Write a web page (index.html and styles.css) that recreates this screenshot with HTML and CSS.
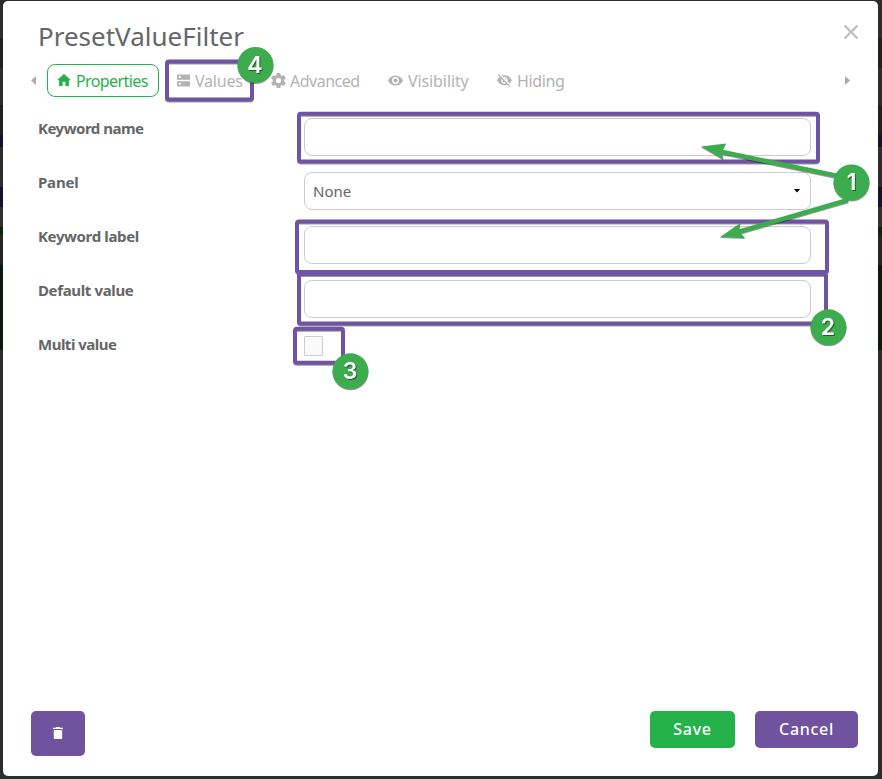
FILE: index.html
```html
<!DOCTYPE html>
<html lang="en">
<head>
<meta charset="utf-8">
<title>PresetValueFilter</title>
<link rel="stylesheet" href="styles.css">
</head>
<body>
<main class="dialog">
  <header class="head">
    <h1 class="title">PresetValueFilter</h1>
    <button class="close" aria-label="Close"><svg width="16" height="16" viewBox="0 0 16 16"><path d="M1.500 1.500l13 13M14.500 1.500l-13 13" stroke="#c0c0c0" stroke-width="2.400"/></svg></button>
  </header>
  <nav class="tabs">
    <svg class="prev" width="5" height="9" viewBox="0 0 5 9"><path d="M5 0v9L0 4.500z" fill="#aaa"/></svg>
    <a class="tab active"><svg width="14" height="12" viewBox="2 3 20 17"><path d="M10 20v-6h4v6h5v-8h3L12 3 2 12h3v8z"/></svg><span class="t1">Properties</span></a>
    <a class="tab values"><svg width="13" height="13" viewBox="0 0 13 13"><path fill-rule="evenodd" d="M0 .500h13v5.200H0zM1.800 2v2h2V2zM0 7.200h13v5.200H0zM1.800 8.700v2h2v-2z"/></svg><span class="t2">Values</span></a>
    <a class="tab adv"><svg width="15" height="15" viewBox="2 2 20 20"><path d="M19.430 12.980c.040-.320.070-.640.070-.980s-.030-.660-.070-.980l2.110-1.650c.190-.150.240-.420.120-.640l-2-3.460c-.120-.220-.390-.300-.610-.220l-2.490 1c-.520-.400-1.080-.730-1.690-.980l-.380-2.650C14.460 2.180 14.250 2 14 2h-4c-.250 0-.460.180-.490.420l-.380 2.650c-.610.250-1.170.590-1.690.980l-2.490-1c-.230-.090-.490 0-.610.220l-2 3.460c-.130.220-.070.490.120.640l2.110 1.650c-.040.320-.070.650-.070.980s.030.660.070.980l-2.110 1.650c-.190.150-.240.420-.120.640l2 3.460c.120.220.390.300.610.220l2.490-1c.520.400 1.080.730 1.690.980l.380 2.650c.030.240.240.420.490.420h4c.250 0 .460-.180.490-.420l.380-2.650c.610-.250 1.170-.590 1.690-.980l2.490 1c.230.090.490 0 .610-.220l2-3.460c.120-.220.070-.490-.120-.640zM12 15.500a3.500 3.500 0 1 1 0-7 3.500 3.500 0 0 1 0 7z"/></svg><span class="t3">Advanced</span></a>
    <a class="tab vis"><svg width="15" height="11" viewBox="1 4.500 22 15"><path d="M12 4.500C7 4.500 2.730 7.610 1 12c1.730 4.390 6 7.500 11 7.500s9.270-3.110 11-7.500c-1.730-4.390-6-7.500-11-7.500zM12 17a5 5 0 1 1 0-10 5 5 0 0 1 0 10zm0-8a3 3 0 1 0 0 6 3 3 0 0 0 0-6z"/></svg><span class="t4">Visibility</span></a>
    <a class="tab hid"><svg width="15" height="13" viewBox="1 2.500 22 19.500"><path d="M12 7c2.760 0 5 2.240 5 5 0 .650-.130 1.260-.360 1.830l2.920 2.920c1.510-1.260 2.700-2.890 3.430-4.750-1.730-4.390-6-7.500-11-7.500-1.400 0-2.740.250-3.980.700l2.160 2.160C10.740 7.130 11.350 7 12 7zM2 4.270l2.740 2.740C3.080 8.300 1.780 10.020 1 12c1.730 4.390 6 7.500 11 7.500 1.550 0 3.030-.300 4.380-.840L19.730 22 21 20.730 3.270 3zM7.530 9.800l1.550 1.550A3 3 0 0 0 12 15c.220 0 .440-.030.650-.080l1.550 1.550A5 5 0 0 1 7.530 9.800zm4.310-.780l3.150 3.150.020-.160a3 3 0 0 0-3.170-2.990z"/></svg><span class="t5">Hiding</span></a>
    <svg class="next" width="5" height="9" viewBox="0 0 5 9"><path d="M0 0v9l5-4.500z" fill="#aaa"/></svg>
  </nav>
  <form class="form">
    <label>Keyword name</label><div class="field"></div>
    <label class="short">Panel</label><div class="field"><span class="none">None</span><svg width="6" height="4" viewBox="0 0 6 4"><path d="M0 0h6L3 3.500z"/></svg></div>
    <label class="mid">Keyword label</label><div class="field"></div>
    <label class="mid">Default value</label><div class="field"></div>
    <label>Multi value</label><div class="check"></div>
  </form>
  <footer class="foot">
    <button class="btn trash" aria-label="Delete"><svg width="10" height="12" viewBox="0 0 10 12"><path d="M3.300 0h3.400l.6.700H10V2H0V.700h2.700zM.8 3h8.400v8.200q0 .8-.8.800H1.600q-.8 0-.8-.8z" fill="#fff"/></svg></button>
    <button class="btn save">Save</button>
    <button class="btn cancel">Cancel</button>
  </footer>
</main>
<svg class="notes" width="882" height="779" viewBox="0 0 882 779">
  <g class="frames">
    <rect x="167" y="61.500" width="85" height="38" rx="2"/>
    <rect x="299" y="113.700" width="519" height="47.800" rx="2"/>
    <rect x="297" y="221.500" width="530" height="50.500" rx="2"/>
    <rect x="299" y="274" width="527" height="49.500" rx="2"/>
    <rect x="295" y="328.700" width="48" height="34" rx="2"/>
  </g>
  <g class="marks">
    <path d="M838 176L720 151.500" class="shaft"/><path d="M848 200L738 232" class="shaft"/>
    <path d="M701 146.500l25-3-4.500 8.500 2 7.500z"/><path d="M720 237l20.500-14-1.500 8.500 6 6.500z"/>
    <circle cx="851.500" cy="182.500" r="18"/><circle cx="828.500" cy="327.300" r="18"/><circle cx="350.500" cy="371.300" r="18"/><circle cx="255.500" cy="65" r="18"/>
  </g>
  <g class="nums"><text x="851.500" y="190.300">1</text><text x="828" y="335.300">2</text><text x="350" y="379.300">3</text><text x="255" y="73">4</text></g>
</svg>
</body>
</html>
```
FILE: styles.css
```css
* { box-sizing: border-box; }
body {
  margin: 0; height: 779px; overflow: hidden; padding: 1px 4px 3px 3px; position: relative;
  background: linear-gradient(#2c2c2c 0 38px, #202020 38px 68px, #2c2c2c 68px 105px, #202020 105px 135px, #15132b 135px 147px, #2c2c2c 147px 187px, #15132b 187px 207px, #303030 207px 227px, #08260e 227px 235px, #252525 235px 265px, #09190d 265px 350px, #2b2c2c 350px);
  font-family: "Noto Sans", sans-serif; color: #666;
}
.dialog { height: 775px; background: #fff; border-radius: 5px; display: flex; flex-direction: column; }
.head { height: 62px; padding: 16px 19px 0 35px; display: flex; justify-content: space-between; }
.title { margin: 0; font-size: 26px; line-height: 39px; font-weight: 400; }
.close { border: 0; background: none; padding: 7px 0 0; width: 16px; height: 23px; line-height: 0; }
.tabs { height: 34px; display: flex; align-items: center; padding: 0 28px; }
.tab { height: 33px; display: flex; align-items: center; gap: 4px; font-size: 16px; color: #b3b3b3; fill: #b3b3b3; white-space: nowrap; }
.tab svg { flex: none; }
.tab span { padding-top: 2px; }
.t1 { letter-spacing: -.6px; }
.t2 { letter-spacing: -.2px; }
.t3 { letter-spacing: -.5px; }
.t4 { letter-spacing: -.1px; }
.t5 { letter-spacing: -.35px; }
.active { margin-left: 11px; width: 112px; padding-left: 9px; gap: 5px; border: 1px solid #26b24b; border-radius: 8px; color: #26b24b; fill: #26b24b; }
.values { margin-left: 18px; width: 94px; gap: 5px; }
.adv { width: 117px; }
.vis { width: 109px; gap: 5px; }
.hid { gap: 5px; }
.next { margin-left: auto; }
.form { display: grid; grid-template-columns: 266px 507px; grid-auto-rows: 54px; padding: 21px 0 0 35px; }
.form label { font-size: 15px; line-height: 20px; font-weight: 700; letter-spacing: -.5px; }
.form .mid { letter-spacing: -.36px; }
.form .short { letter-spacing: -.2px; }
.field { height: 38px; border: 1px solid #ccc; border-radius: 8px; display: flex; align-items: center; justify-content: space-between; padding: 0 10px 0 8px; font-size: 15px; }
.check { width: 19px; height: 20px; margin-top: 2px; border: 1px solid #ccc; background: #fafafa; border-radius: 1px; }
.foot { margin-top: auto; height: 65px; padding: 0 20px 0 28px; display: flex; align-items: flex-start; }
.btn { border: 0; border-radius: 5px; height: 37px; padding: 0 0 2px; background: #6f539e; color: #fff; font: 500 16px "Noto Sans", sans-serif; letter-spacing: .7px; }
.trash { width: 54px; height: 45px; margin-right: auto; }
.save { width: 85px; background: #26b24b; margin-right: 20px; }
.cancel { width: 103px; }
.notes { position: absolute; left: 0; top: 0; }
.frames { fill: none; stroke: #6f54a3; stroke-width: 4; filter: drop-shadow(0 1px .5px #0006); }
.marks { fill: #3cac4e; filter: drop-shadow(0 1px .5px #0006); }
.shaft { stroke: #3cac4e; stroke-width: 4.5; fill: none; }
.nums { font: 600 23px Inter, sans-serif; fill: #fff; text-anchor: middle; filter: drop-shadow(1px 1px .5px #0007); }
```
